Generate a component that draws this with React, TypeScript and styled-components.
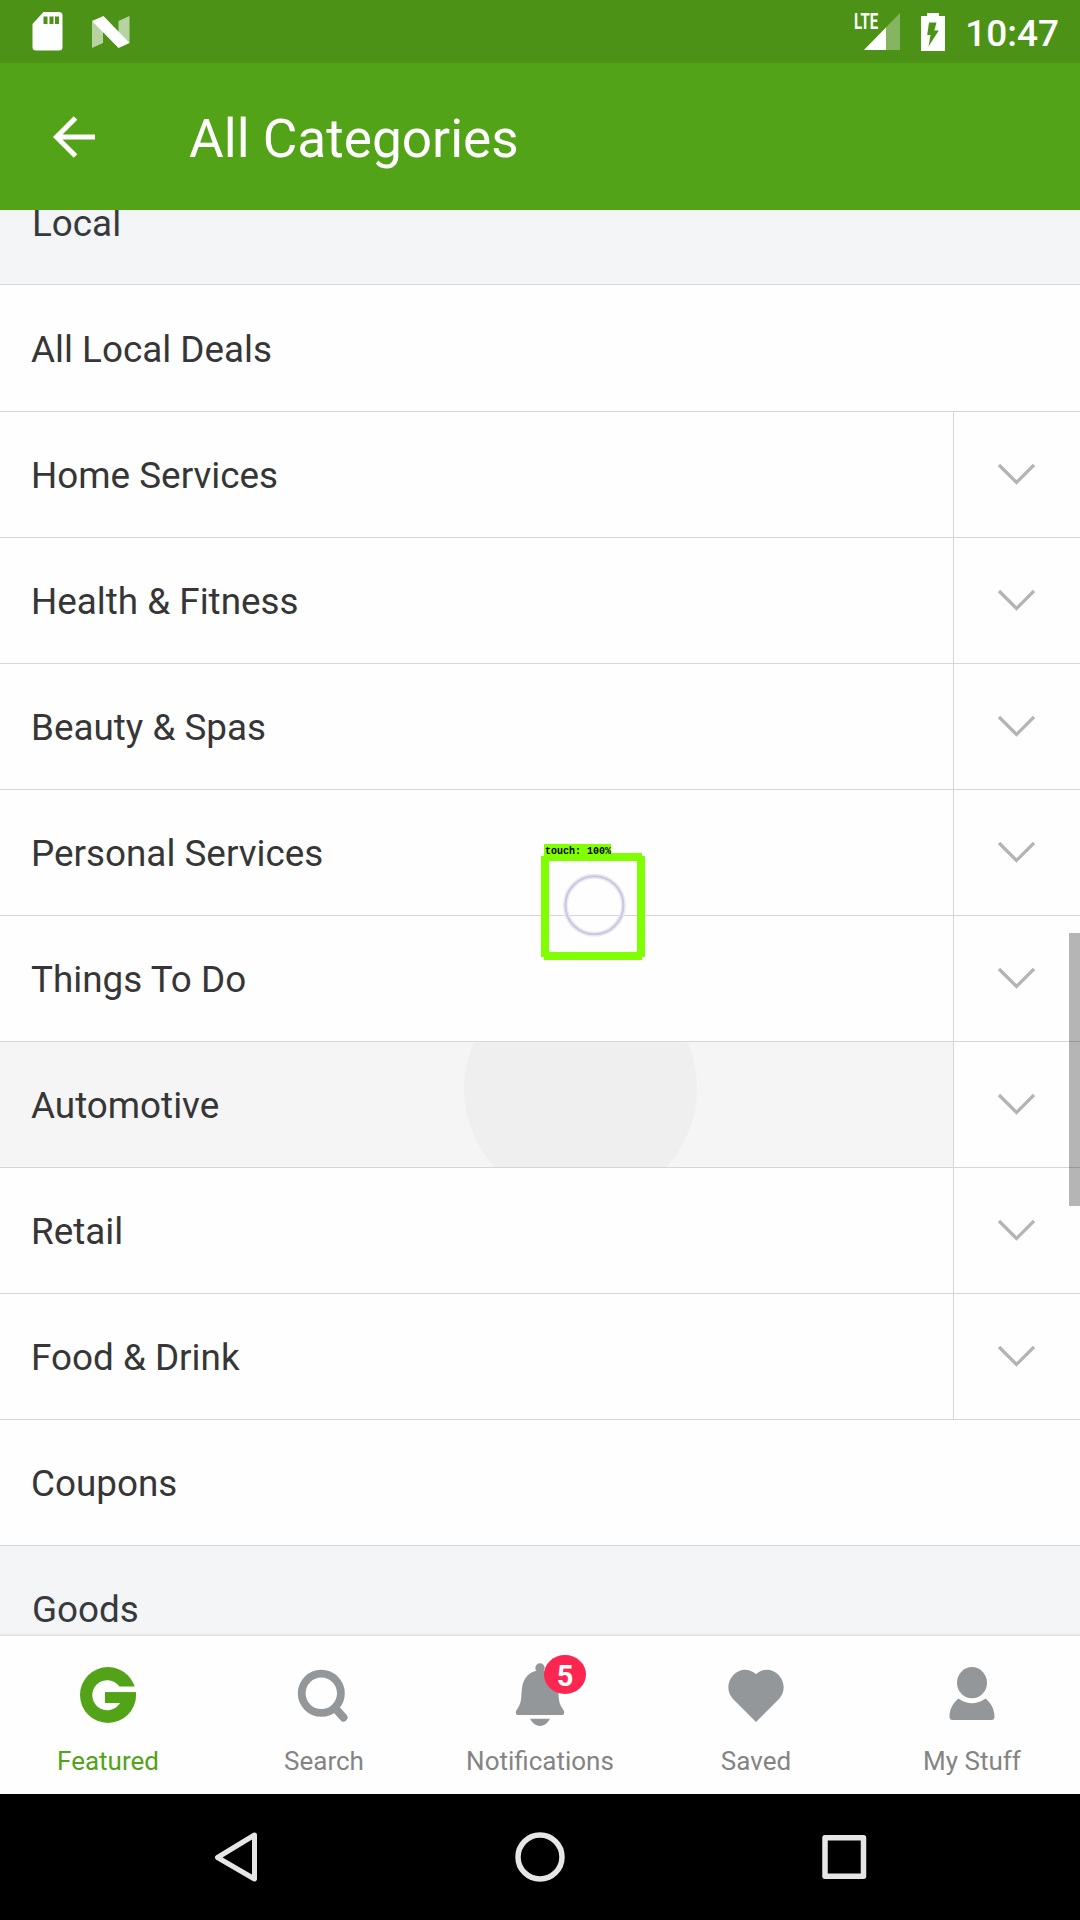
import React from 'react';
import styled, { createGlobalStyle } from 'styled-components';

const GlobalStyle = createGlobalStyle`
  * { box-sizing: border-box; }
  body { margin: 0; background: #000; font-family: Roboto, "Liberation Sans", sans-serif; }
`;

const Screen = styled.div`
  display: flex;
  flex-direction: column;
  width: 1080px;
  height: 1920px;
  overflow: hidden;
  background: #fefefe;
`;

const StatusBar = styled.header`
  display: flex;
  align-items: center;
  justify-content: space-between;
  flex: none;
  height: 63px;
  padding: 0 21px 0 32px;
  background: #4c9217;
`;

const StatusGroup = styled.div<{ $gap: number }>`
  display: flex;
  align-items: center;
  gap: ${(p) => p.$gap}px;
`;

const Signal = styled.div`
  position: relative;
  width: 45px;
  height: 38px;
  svg { display: block; }
`;

const Lte = styled.span`
  position: absolute;
  left: -1px;
  top: -2px;
  font: 700 22px/22px Roboto, sans-serif;
  color: #fff;
  transform: scaleX(0.68);
  transform-origin: left;
`;

const Clock = styled.time`
  margin-left: -1px;
  font-size: 37px;
  font-weight: 500;
  line-height: 44px;
  color: #fff;
  padding-top: 4px;
`;

const AppBar = styled.div`
  display: flex;
  align-items: center;
  flex: none;
  height: 147px;
  padding: 0 53px;
  gap: 94px;
  background: #53a318;
`;

const Title = styled.h1`
  margin: 5px 0 0;
  font-size: 53.2px;
  font-weight: 400;
  line-height: 62px;
  color: #fff;
`;

const Content = styled.main`
  position: relative;
  flex: 1;
  min-height: 0;
  overflow: hidden;
`;

const List = styled.ul`
  list-style: none;
  margin: -50px 0 0;
  padding: 0;
`;

const Row = styled.li<{ $section?: boolean; $height?: number }>`
  display: flex;
  height: ${(p) => p.$height ?? 126}px;
  border-bottom: 1px solid #d5d6d7;
  background: ${(p) => (p.$section ? '#f4f5f7' : '#fefefe')};
`;

const RowLabel = styled.div<{ $pressed?: boolean; $section?: boolean; $inset?: number }>`
  position: relative;
  display: flex;
  align-items: center;
  flex: 1;
  padding: ${(p) => p.$inset ?? 3}px 31px 0 ${(p) => (p.$section ? 32 : 31)}px;
  overflow: hidden;
  font-size: 36.85px;
  line-height: 44px;
  color: ${(p) => (p.$section ? '#373a3d' : '#363636')};
  background: ${(p) => (p.$pressed ? '#f5f5f5' : 'transparent')};
`;

const Ripple = styled.span`
  position: absolute;
  left: 464px;
  top: -70px;
  width: 233px;
  height: 233px;
  border-radius: 50%;
  background: #efefef;
`;

const Expander = styled.button`
  display: flex;
  align-items: center;
  justify-content: center;
  width: 127px;
  padding: 0 2px 0 0;
  border: 0;
  border-left: 1px solid #d5d6d7;
  background: transparent;
`;

const ScrollThumb = styled.div`
  position: absolute;
  right: 0;
  top: 723px;
  width: 11px;
  height: 273px;
  background: rgba(0, 0, 0, 0.285);
`;

const Detection = styled.div`
  position: absolute;
  left: 541px;
  top: 634px;
  width: 104px;
  height: 116px;
`;

const DetectionLabel = styled.span`
  position: absolute;
  left: 3px;
  top: 0;
  width: 67px;
  height: 12px;
  padding-left: 1px;
  font: 700 10px/15px "Liberation Mono", monospace;
  white-space: pre;
  color: #000;
  background: #80ff00;
`;

const TabBar = styled.nav`
  display: grid;
  grid-template-columns: repeat(5, 1fr);
  flex: none;
  height: 159px;
  background: #fefefe;
  box-shadow: 0 -1px 2px rgba(0, 0, 0, 0.06);
  border-top: 1px solid #dfdfdf;
  z-index: 1;
`;

const Tab = styled.div<{ $active?: boolean }>`
  position: relative;
  display: flex;
  flex-direction: column;
  align-items: center;
  padding-top: 18px;
  font-size: 26px;
  line-height: 32px;
  color: ${(p) => (p.$active ? '#53a318' : '#848484')};
  svg { display: block; margin-bottom: 19px; }
`;

const Badge = styled.span`
  position: absolute;
  left: 112px;
  top: 19px;
  width: 42px;
  height: 39px;
  border-radius: 50%;
  text-align: center;
  font-size: 29px;
  font-weight: 700;
  line-height: 43px;
  color: #fff;
  background: #fc2651;
`;

const SystemNav = styled.footer`
  display: flex;
  align-items: center;
  justify-content: space-between;
  flex: none;
  height: 126px;
  padding: 0 212px;
  background: #000;
`;

type Category = {
  name: string;
  kind?: 'section' | 'plain';
  pressed?: boolean;
  height?: number;
  inset?: number;
};

const categories: Category[] = [
  { name: 'Local', kind: 'section', height: 125, inset: 4 },
  { name: 'All Local Deals', kind: 'plain', height: 127, inset: 4 },
  { name: 'Home Services' },
  { name: 'Health & Fitness' },
  { name: 'Beauty & Spas' },
  { name: 'Personal Services' },
  { name: 'Things To Do' },
  { name: 'Automotive', pressed: true },
  { name: 'Retail' },
  { name: 'Food & Drink' },
  { name: 'Coupons', kind: 'plain' },
  { name: 'Goods', kind: 'section' },
];

const grey = '#949799';

const tabs = [
  {
    label: 'Featured',
    icon: (
      <>
        <circle cx="32" cy="41" r="28" fill="#53a318" />
        <path d="M61 32.500H43.500A15 15 0 1 0 44.200 48.800H29V38.300H61Z" fill="#fefefe" />
        <path d="M29 38.300H60L59 49H29Z" fill="#53a318" />
      </>
    ),
  },
  {
    label: 'Search',
    icon: (
      <g fill="none" stroke={grey}>
        <circle cx="29.300" cy="39.300" r="19.600" strokeWidth="7.800" />
        <path d="M43 54L51.500 63.500" strokeWidth="8" strokeLinecap="round" />
      </g>
    ),
  },
  {
    label: 'Notifications',
    icon: (
      <g fill={grey}>
        <circle cx="32" cy="32" r="4.700" transform="translate(0 -18)" />
        <path d="M32 16.500C42 16.500 48.500 23 50 34C51.200 43 50 47 53.500 53L56 57Q57 61 54 61H10Q7 61 8 57L10.500 53C14 47 12.800 43 14 34C15.500 23 22 16.500 32 16.500Z" />
        <path d="M22 64.700H42Q38 72 32 72T22 64.700Z" />
      </g>
    ),
  },
  {
    label: 'Saved',
    icon: (
      <path
        d="M32 20.200C38 14.500 47 14 53 19.500C61.500 27 61.500 38 55 45L32 68L9 45C2.500 38 2.500 27 11 19.500C17 14 26 14.500 32 20.200Z"
        fill={grey}
      />
    ),
  },
  {
    label: 'My Stuff',
    icon: (
      <g fill={grey}>
        <ellipse cx="32" cy="28.700" rx="15" ry="15.600" />
        <path d="M18.500 44.500Q32 54 45.500 44.500C51 49 54.500 55 54.500 63Q54.500 66 51.500 66H12.500Q9.500 66 9.500 63C9.500 55 13 49 18.500 44.500Z" />
      </g>
    ),
  },
];

const Chevron = () => (
  <svg width="38" height="24" viewBox="0 0 38 24" fill="none" stroke="#b4b4b4" strokeWidth="3.300">
    <path d="M2 2L19.500 19.500L37 2" />
  </svg>
);

export default function App() {
  return (
    <Screen>
      <GlobalStyle />
      <StatusBar>
        <StatusGroup $gap={29}>
          <svg width="31" height="39" viewBox="0 0 31 39">
            <path d="M11.500 0H27Q30.500 0 30.500 3.500V35Q30.500 38.500 27 38.500H4Q.5 38.500 .5 35V12Z" fill="#fff" />
            <path d="M11.500 4.500h4v7.500h-4zM17.500 4.500h4v7.500h-4zM23 4.500h4v7.500h-4z" fill="#4c9217" />
          </svg>
          <svg width="38" height="32" viewBox="0 0 38 32">
            <path d="M0 5L11 12V27L0 32ZM37.500 0L26.500 5V20L37.500 27Z" fill="#fff" opacity=".6" />
            <path d="M0 5L11.500 0L37.500 27L26.500 32Z" fill="#fff" />
          </svg>
        </StatusGroup>
        <StatusGroup $gap={21}>
          <Signal>
            <svg width="45" height="38" viewBox="0 0 45 38">
              <path d="M45 0V37H9Z" fill="#fff" opacity=".32" />
              <path d="M31 14.400V37H9Z" fill="#fff" />
            </svg>
            <Lte>LTE</Lte>
          </Signal>
          <svg width="24" height="38" viewBox="0 0 24 38">
            <path d="M6 0H18V3H24V38H0V3H6Z" fill="#fff" />
            <path d="M8 9.500H15.500L13.300 17.500H17.800L7.500 33.500L9.500 22H6.200Z" fill="#4c9217" />
          </svg>
          <Clock>10:47</Clock>
        </StatusGroup>
      </StatusBar>
      <AppBar>
        <svg width="42" height="42" viewBox="0 0 42 42" fill="none" stroke="#fff" strokeWidth="5">
          <path d="M42 21H4M22.500 2L3.500 21L22.500 40" />
        </svg>
        <Title>All Categories</Title>
      </AppBar>
      <Content>
        <List>
          {categories.map(({ name, kind, pressed, height, inset }) => (
            <Row key={name} $section={kind === 'section'} $height={height}>
              <RowLabel $pressed={pressed} $section={kind === 'section'} $inset={inset}>
                {pressed && <Ripple />}
                {name}
              </RowLabel>
              {!kind && (
                <Expander aria-label={name}>
                  <Chevron />
                </Expander>
              )}
            </Row>
          ))}
        </List>
        <ScrollThumb />
        <Detection>
          <svg width="104" height="116" viewBox="0 0 104 116" fill="none">
            <path d="M4 12V113M100 12V113" stroke="#80ff00" strokeWidth="8" />
            <path d="M3 13H101M3 112H101" stroke="#80ff00" strokeWidth="8" />
            <circle cx="53.400" cy="61.300" r="29" stroke="#ebe8f5" strokeWidth="5" />
            <circle cx="53.400" cy="61.300" r="29" stroke="#cbc7dd" strokeWidth="2" />
          </svg>
          <DetectionLabel>touch: 100%</DetectionLabel>
        </Detection>
      </Content>
      <TabBar>
        {tabs.map(({ label, icon }, i) => (
          <Tab key={label} $active={i === 0}>
            <svg width="64" height="72" viewBox="0 0 64 72">
              {icon}
            </svg>
            {label}
            {label === 'Notifications' && <Badge>5</Badge>}
          </Tab>
        ))}
      </TabBar>
      <SystemNav>
        <svg width="50" height="52" viewBox="0 0 50 52" fill="none" stroke="#e6e6e6" strokeWidth="5" strokeLinejoin="round">
          <path d="M42.500 4L5.500 26.500L42.500 48Z" />
        </svg>
        <svg width="52" height="52" viewBox="0 0 52 52" fill="none" stroke="#e6e6e6" strokeWidth="5.500">
          <circle cx="26" cy="26" r="22" />
        </svg>
        <svg width="50" height="52" viewBox="0 0 50 52" fill="none" stroke="#e6e6e6" strokeWidth="5.500" strokeLinejoin="round">
          <rect x="7" y="6.700" width="38.500" height="38.500" />
        </svg>
      </SystemNav>
    </Screen>
  );
}
